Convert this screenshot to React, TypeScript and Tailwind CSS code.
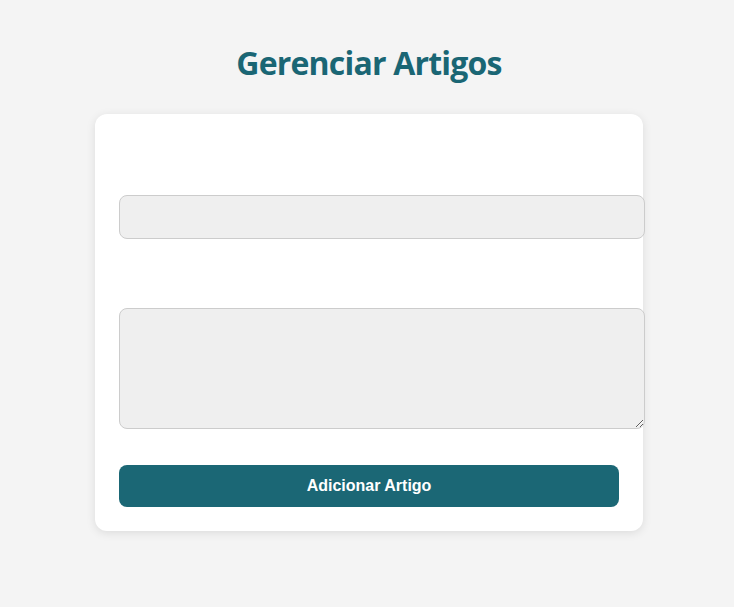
export default function App() {
    return (
        <div className="min-h-[607px] bg-[#f4f4f4] pl-[4px] pt-[43px] font-['Liberation_Sans',Arial,sans-serif]">
            <h1 className="text-center text-[32px] leading-[40px] font-bold tracking-[-0.8px] text-[#1a6674] font-['Open_Sans','Noto_Sans',sans-serif]">
                Gerenciar Artigos
            </h1>

            <div className="mx-auto mt-[31px] w-[548px] rounded-[12px] bg-white p-6 shadow-[0_2px_10px_rgba(0,0,0,0.1)]">
                <form onSubmit={e => e.preventDefault()}>
                    <label className="block h-[57px] text-white">Título</label>
                    <input
                        type="text"
                        className="box-content block h-[42px] w-full rounded-[8px] border border-[#cccccc] bg-[#efefef] px-3 outline-none"
                    />
                    <label className="mt-3 block h-[57px] text-white">Conteúdo</label>
                    <textarea
                        className="box-content block h-[119px] w-full rounded-[8px] border border-[#cccccc] bg-[#efefef] px-3 outline-none"
                    />
                    <button
                        type="submit"
                        className="mt-9 block h-[42px] w-full rounded-[8px] bg-[#1b6775] text-[16px] font-bold text-white"
                    >
                        Adicionar Artigo
                    </button>
                </form>
            </div>
        </div>
    );
}
